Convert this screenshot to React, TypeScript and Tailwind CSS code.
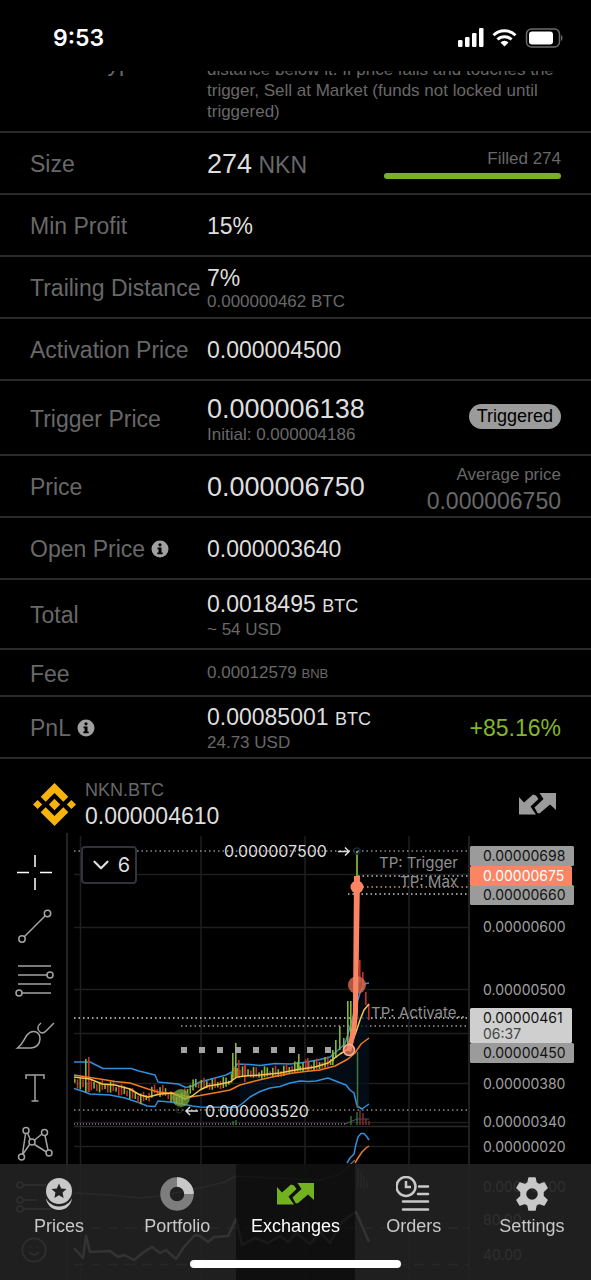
import type { ReactNode } from "react"
import { ChevronDown, Smile } from "lucide-react"

interface RowProps {
  label: string
  info?: boolean
  className?: string
  aside?: ReactNode
  children: ReactNode
}

function InfoIcon() {
  return (
    <svg viewBox="0 0 18 18" className="h-[18px] w-[18px]" aria-hidden="true">
      <circle cx="9" cy="9" r="8.5" fill="#a0a0a0" />
      <circle cx="9" cy="4.8" r="1.6" fill="#000" />
      <path d="M6.5 7.5h4v5h1.2v1.8H6.3v-1.8h1.3V9.2H6.5z" fill="#000" />
    </svg>
  )
}

function Row({ label, info, className = "min-h-[62px]", aside, children }: RowProps) {
  return (
    <div className={`grid grid-cols-[177px_1fr_auto] items-center border-b-2 border-[#2a2a2a] px-[30px] pt-[2px] ${className}`}>
      <dt className="flex items-center gap-1.5 text-[23px] leading-7 whitespace-nowrap text-[#686868]">
        {label}
        {info && (
          <button type="button" aria-label={`About ${label}`}>
            <InfoIcon />
          </button>
        )}
      </dt>
      <dd className="text-[23px] leading-7 whitespace-nowrap text-[#dedede]">{children}</dd>
      {aside && <dd className="text-right whitespace-nowrap">{aside}</dd>}
    </div>
  )
}

function Sub({ children }: { children: ReactNode }) {
  return <div className="text-[17px] leading-5 text-[#686868]">{children}</div>
}

function SwapIcon({ className }: { className: string }) {
  return (
    <svg viewBox="0 0 37 22" className={className} fill="currentColor" aria-hidden="true">
      <path d="M0 4 5 9.5 14 1.5 17 2.5 19.500 6 11.500 13.500 14.500 18 17 21.500H0z" />
      <path d="M20.500 0H37V17L31 11.500 20.500 20.500 18.500 20 15.500 14.500 24.500 6z" />
    </svg>
  )
}

function StatusBar() {
  return (
    <header className="flex h-[71px] items-start justify-between pt-[22px] pr-[28px] pl-[53px] text-white">
      <time className="font-['Inter',sans-serif] text-[23px] leading-8 font-semibold">9:53</time>
      <svg viewBox="0 0 105 20" className="mt-[6px] h-[20px] w-[105px]" aria-hidden="true">
        <g fill="#fff">
          <rect x="0" y="12" width="4.5" height="7" rx="1.2" />
          <rect x="7" y="9" width="4.5" height="10" rx="1.2" />
          <rect x="14" y="5" width="4.5" height="14" rx="1.2" />
          <rect x="21" y="0" width="4.5" height="19" rx="1.2" />
          <path d="M46.500 18.500 42.500 14.500a5.700 5.700 0 0 1 8 0z" />
        </g>
        <g fill="none" stroke="#fff" strokeWidth="3">
          <path d="M39.500 11.500a10 10 0 0 1 14 0" />
          <path d="M35.500 7.300a15.600 15.600 0 0 1 22 0" />
        </g>
        <rect x="68.500" y="1" width="33" height="18" rx="5" fill="none" stroke="#6b6b6b" strokeWidth="1.500" />
        <rect x="71" y="3.500" width="24" height="13" rx="3" fill="#fff" />
        <path d="M103 7v6c2-.8 2-5.200 0-6z" fill="#6b6b6b" />
      </svg>
    </header>
  )
}

function OrderDetails() {
  return (
    <dl>
      <div className="flex h-[62px] items-end overflow-hidden border-b-2 border-[#2a2a2a] px-[30px] text-[#686868]">
        <dt className="mb-[54px] w-[177px] shrink-0 text-[23px] leading-7">Order Type</dt>
        <dd className="pb-[9px] text-[17px] leading-[21px]">
          distance below it. If price falls and touches the trigger, Sell at Market (funds not locked until triggered)
        </dd>
      </div>
      <Row
        label="Size"
        aside={
          <div className="w-[177px]">
            <div className="text-[17px] leading-5 text-[#686868]">Filled 274</div>
            <div className="mt-1 h-[6px] rounded-full bg-[#79b026]" />
          </div>
        }
      >
        <span className="text-[27px]">274</span> <span className="text-[#686868]">NKN</span>
      </Row>
      <Row label="Min Profit">15%</Row>
      <Row label="Trailing Distance">
        7%
        <Sub>0.000000462 BTC</Sub>
      </Row>
      <Row label="Activation Price">0.000004500</Row>
      <Row
        label="Trigger Price"
        className="min-h-[75px]"
        aside={
          <span className="mb-1 block rounded-full bg-[#9b9b9b] px-2 text-[18px] leading-[25px] text-black">Triggered</span>
        }
      >
        <div className="text-[27px] leading-8">0.000006138</div>
        <Sub>Initial: 0.000004186</Sub>
      </Row>
      <Row
        label="Price"
        aside={
          <div className="pt-1 text-[#686868]">
            <div className="text-[17px] leading-6">Average price</div>
            <div className="text-[23px] leading-7">0.000006750</div>
          </div>
        }
      >
        <span className="text-[27px]">0.000006750</span>
      </Row>
      <Row label="Open Price" info>
        0.000003640
      </Row>
      <Row label="Total" className="min-h-[70px]">
        0.0018495 <span className="text-[18px]">BTC</span>
        <Sub>~ 54 USD</Sub>
      </Row>
      <Row label="Fee" className="min-h-[47px]">
        <Sub>
          0.00012579 <span className="text-[13px]">BNB</span>
        </Sub>
      </Row>
      <Row
        label="PnL"
        info
        aside={<span className="text-[23px] leading-7 text-[#83b52e]">+85.16%</span>}
      >
        0.00085001 <span className="text-[18px]">BTC</span>
        <Sub>24.73 USD</Sub>
      </Row>
    </dl>
  )
}

function MarketHeader() {
  return (
    <div className="flex items-center pt-[19px] pr-[35px] pl-[33px]">
      <svg viewBox="0 0 42 42" className="h-[43px] w-[43px]" fill="#f6b30b" aria-label="Binance">
        <path d="M21 0 34.500 13.500 29.600 18.400 21 9.800 12.400 18.400 7.500 13.500z" />
        <path d="M21 42 34.500 28.500 29.600 23.600 21 32.200 12.400 23.600 7.500 28.500z" />
        <path d="M21 15.500 26.500 21 21 26.500 15.500 21zM4.500 16.500 9 21 4.500 25.500 0 21zM37.500 16.500 42 21 37.500 25.500 33 21z" />
      </svg>
      <div className="ml-[9px] flex-1">
        <div className="text-[18px] leading-6 text-[#686868]">NKN.BTC</div>
        <div className="text-[23px] leading-7 text-[#dedede]">0.000004610</div>
      </div>
      <button type="button" aria-label="Trade" className="text-[#9b9b9b]">
        <SwapIcon className="h-[22px] w-[37px]" />
      </button>
    </div>
  )
}

const TOOLS: { name: string; icon: ReactNode }[] = [
  {
    name: "Crosshair",
    icon: <path d="M20 3v12M20 26v12M2 20.500h12M25 20.500h12" stroke="#fff" />,
  },
  {
    name: "Trend line",
    icon: (
      <>
        <circle cx="7" cy="33" r="3.200" />
        <circle cx="32.500" cy="7.500" r="3.200" />
        <path d="M9.300 30.700 30.200 9.800" />
      </>
    ),
  },
  {
    name: "Fib retracement",
    icon: (
      <>
        <path d="M3 6h33M3 15h29M3 24h33M7 33h29" />
        <circle cx="35" cy="15" r="3" />
        <circle cx="4" cy="33" r="3" />
      </>
    ),
  },
  {
    name: "Brush",
    icon: (
      <>
        <path d="M2.500 34C8 30 9 25 12 21c5-6 13-4 13 4 0 5-4 9-9 9z" />
        <path d="M26 9c-4 3-4 7-1 9 2 2 4 1 6-1l8-8" />
      </>
    ),
  },
  {
    name: "Text",
    icon: <path d="M11 11V7h18v4M20 7v26M16.500 33h7" />,
  },
  {
    name: "Pattern",
    icon: (
      <>
        <path d="M10.500 12 7.500 32M12.500 11 15.500 18M19 18.500 27 12M30 13.500 33 28M19.500 22.500 31.500 30M14.500 22.500 8 32" />
        <circle cx="11" cy="8.500" r="3" />
        <circle cx="17" cy="20" r="3" />
        <circle cx="29.500" cy="10.500" r="3" />
        <circle cx="34" cy="31" r="3" />
        <circle cx="6.500" cy="35" r="3" />
      </>
    ),
  },
  {
    name: "Forecast",
    icon: (
      <>
        <path d="M8 9h28M8 24h14M8 33h28" />
        <circle cx="5" cy="9" r="3" />
        <circle cx="5" cy="24" r="3" />
        <circle cx="5" cy="33" r="3" />
      </>
    ),
  },
]

function Toolbar() {
  return (
    <div className="flex w-[68px] shrink-0 flex-col border-r-2 border-[#232323] pt-3">
      {TOOLS.map((tool) => (
        <button key={tool.name} type="button" aria-label={tool.name} className="flex h-[54px] items-center pl-[15px]">
          <svg viewBox="0 0 40 40" className="h-[40px] w-[40px]" fill="none" stroke="#a3a3a3" strokeWidth="1.500">
            {tool.icon}
          </svg>
        </button>
      ))}
      <button type="button" aria-label="Icons" className="flex h-[54px] items-center pl-5 text-[#a3a3a3]">
        <Smile size={28} strokeWidth={1.500} />
      </button>
    </div>
  )
}

// Middle of the quiet candles, sampled along the time axis
const BASE: [number, number][] = [
  [74, 1080], [80, 1084], [90, 1086], [110, 1087], [120, 1090], [130, 1093], [140, 1099], [148, 1097],
  [155, 1090], [165, 1092], [176, 1100], [182, 1099], [188, 1090], [196, 1084], [210, 1085], [228, 1083],
  [234, 1074], [240, 1071], [260, 1074], [270, 1072], [280, 1073], [290, 1069], [300, 1067], [320, 1065],
  [330, 1062], [336, 1053],
]

function baseAt(x: number) {
  for (let i = 1; i < BASE.length; i++) {
    const [x0, y0] = BASE[i - 1]
    const [x1, y1] = BASE[i]
    if (x <= x1) return y0 + ((y1 - y0) * (x - x0)) / (x1 - x0)
  }
  return BASE[BASE.length - 1][1]
}

const GREEN = "#86b62b"
const RED = "#c4302a"

const quiet = Array.from({ length: 95 }, (_, i) => {
  const x = 75 + i * 2.75
  const mid = baseAt(x) + Math.sin(i * 1.7) * 1.5
  const half = 2 + Math.abs(Math.sin(i * 2.3)) * 3.5
  return { x, top: mid - half, bottom: mid + half, color: Math.sin(i * 2.9 + 1) > (x < 180 ? 0.2 : -0.3) ? GREEN : RED }
})

const spikes = [
  { x: 86, top: 1059, bottom: 1092, color: GREEN },
  { x: 89, top: 1057, bottom: 1092, color: RED },
  { x: 233, top: 1053, bottom: 1080, color: GREEN },
  { x: 236, top: 1043, bottom: 1078, color: GREEN },
  { x: 239, top: 1060, bottom: 1078, color: RED },
  { x: 245, top: 1064, bottom: 1082, color: RED },
  { x: 299, top: 1054, bottom: 1070, color: GREEN },
  { x: 308, top: 1058, bottom: 1072, color: RED },
  { x: 333, top: 1050, bottom: 1065, color: GREEN },
  { x: 336, top: 1040, bottom: 1058, color: GREEN },
  { x: 340, top: 1026, bottom: 1050, color: GREEN },
  { x: 344, top: 1038, bottom: 1050, color: GREEN },
  { x: 348, top: 1001, bottom: 1045, color: GREEN },
  { x: 351, top: 1001, bottom: 1036, color: GREEN },
  { x: 360, top: 960, bottom: 982, color: RED },
  { x: 363, top: 972, bottom: 990, color: RED },
  { x: 366, top: 992, bottom: 1005, color: RED },
  { x: 369, top: 1004, bottom: 1020, color: RED },
]

const AXIS: [string, number][] = [
  ["0.00000600", 927], ["0.00000500", 990], ["0.00000380", 1084], ["0.00000340", 1122],
  ["0.00000020", 1147], ["0.00000000", 1187], ["80.00", 1220], ["40.00", 1255],
]

const TAGS = [
  { text: "0.00000698", y: 846, w: 104, bg: "#9b9b9b", fg: "#111" },
  { text: "0.00000660", y: 885, w: 104, bg: "#9b9b9b", fg: "#111" },
  { text: "0.00000675", y: 866, w: 102, bg: "#fb8462", fg: "#fff" },
  { text: "0.00000450", y: 1043, w: 104, bg: "#9b9b9b", fg: "#111" },
]

const DOTTED: [number, number, string][] = [
  [74, 851, "#8a8a8a"], [358, 876, "#b8b8b8"], [358, 887, "#e09078"], [348, 894, "#c8c8c8"],
  [74, 1018, "#d8d8d8"], [181, 1026, "#9a9a9a"], [74, 1110, "#8a8a8a"],
]

function PriceChart() {
  return (
    <div className="relative min-w-0 flex-1">
      <svg viewBox="68 833 523 447" className="block h-auto w-full font-['Inter',sans-serif]" role="img" aria-label="NKN.BTC price chart">
        {/* Grid */}
        <g stroke="#1f1f1f" strokeWidth="1.500">
          <path d="M80.500 836V1280M201 836V1280M305 836V1280M409 836V1280" />
          <path d="M74 874.500H469M74 927.500H469M74 989.500H469M74 1033.500H469M74 1083.500H469M74 1122.500H469M74 1146.500H469" />
          <path d="M469 836V1280M74 1126.500H469" stroke="#2a2a2a" />
          <path d="M74 1228H469M74 1264.500H469" stroke="#555" strokeDasharray="10 7" />
        </g>

        {DOTTED.map(([x, y, color]) => (
          <line key={y} x1={x} x2="469" y1={y} y2={y} stroke={color} strokeWidth="1.500" strokeDasharray="1.500 3" />
        ))}

        {/* Bands */}
        <path d="M240 1064 275 1063 300 1063 325 1058 345 1045 355 1015 369 983V1104L362 1109 357 1108 354 1095 340 1084 328 1078 290 1083 255 1093 240 1104z" fill="#04101c" opacity=".7" />
        <g fill="none" stroke="#2f8fdd" strokeWidth="1.500" strokeLinejoin="round">
          <path d="M74 1062 90 1062 96 1065 103 1068.500 131 1068.500 139 1071 155 1075 158 1082 178 1084 186 1087.500 192 1086 200 1082 215 1078 226 1075 232 1072 237 1064 250 1064.500 260 1065.500 275 1063.500 290 1064 300 1063 318 1060 330 1057 345 1044 352 1020 360 993 364 984 369 983" />
          <path d="M74 1088.500 82 1091 90 1094 110 1095 125 1098 140 1103 147 1106 155 1106.500 158 1101 170 1102 182 1104 192 1106 200 1107 237 1107.500 243 1103 250 1097 260 1091.500 270 1088 280 1086.500 290 1083 300 1081 308 1081.500 316 1081 328 1078 338 1082 346 1085 350 1090 354 1093 357 1106 362 1109 369 1104" />
        </g>

        {/* Candles */}
        {[...quiet, ...spikes].map((c, i) => (
          <rect key={i} x={c.x - 1} y={c.top} width="1.600" height={c.bottom - c.top} fill={c.color} />
        ))}
        <path d="M357 851V876" stroke="#6fa02a" strokeWidth="2" />
        <path d="M357.500 1052V1108" stroke="#46743a" strokeWidth="1.500" />
        <circle cx="357" cy="851" r="3" fill="none" stroke="#18263a" strokeWidth="1.500" />

        <g fill="none" strokeWidth="1.500" strokeLinejoin="round">
          <path stroke="#ee7a22" d="M74 1075 87 1077 100 1079 115 1081.500 130 1083 148 1089 158 1092 175 1094 190 1097 200 1095.500 214 1093 230 1090 240 1085 255 1081 272 1077 290 1073.500 305 1071.500 320 1070 335 1066 348 1059 355 1053 361 1044 369 1038" />
          <path stroke="#f6c552" d="M74 1077 90 1079 102 1084 115 1085 130 1089 140 1095 148 1097 160 1094 172 1093 185 1099 192 1096 200 1090 208 1086 218 1084.500 230 1082 237 1077 245 1076 260 1075 280 1073 295 1070 315 1067 328 1063 340 1054 350 1048 356 1032 360 1020 364 1010 369 1004" />
        </g>

        {/* Volume */}
        <path d="M74 1124H345" stroke="#6b5a6e" strokeWidth="2" strokeDasharray="1 2" />
        <path d="M345 1124 357 1119H369" stroke="#6b4a6e" fill="none" />
        <path d="M351 1116V1125M357 1112V1125M236 1120V1125M233 1121V1125" stroke="#2f6d35" strokeWidth="1.500" />
        <path d="M360 1110V1125M363 1113V1125M366 1119V1125M369 1121V1125" stroke="#7c2f35" strokeWidth="1.500" />

        {/* Activation level */}
        {Array.from({ length: 9 }, (_, i) => (
          <rect key={i} x={181 + i * 18} y="1047" width="6" height="6" fill="#a3a3a3" />
        ))}

        {/* Trade marks */}
        <circle cx="181" cy="1098" r="9" fill="#7fae3c" opacity=".75" />
        <circle cx="179" cy="1110" r="3" fill="none" stroke="#1d3018" />
        <circle cx="357" cy="985" r="9" fill="#cf6650" opacity=".85" />
        <path d="M354 876H360L358 1012C357 1030 354 1042 351 1052L346 1050C351 1034 353 1022 353 1005z" fill="#fb8462" />
        <circle cx="357" cy="887" r="6.500" fill="#fb8462" />
        <circle cx="349" cy="1050" r="5.500" fill="#fb8462" fillOpacity=".7" stroke="#fcb19c" strokeWidth="1.500" />

        {/* MACD and RSI panes */}
        <g fill="none" strokeWidth="1.500" strokeLinejoin="round">
          <path stroke="#2f8fdd" d="M347 1163 350 1158 354 1154 356 1144 358 1137 361 1133.500 364 1133.500 367 1137 369 1140" />
          <path stroke="#ee7a22" d="M355 1163 358 1158 362 1152 366 1148 369 1146" />
          <path stroke="#666" d="M74 1193 110 1195 140 1198 160 1196 200 1188 225 1182 236 1176 270 1178 320 1180 340 1174 355 1160" />
          <path stroke="#555" d="M358 1168V1188M361 1172V1188M364 1176V1188M367 1180V1188" />
          <path
            stroke="#c8c8c8"
            strokeWidth="2.500"
            d="M74 1248 83 1258 86 1236 90 1252 110 1251 118 1257 124 1255 134 1260 144 1252 152 1247 160 1253 166 1250 176 1259 184 1247 195 1235 200 1236 208 1242 214 1237 228 1236 236 1219 242 1245 255 1238 268 1243 280 1236 288 1242 296 1233 310 1244 320 1232 330 1243 342 1222 350 1216 356 1212 369 1242"
          />
        </g>

        {/* Chart labels */}
        <g fontSize="16" fill="#dedede">
          <text x="224" y="857">0.000007500</text>
          <text x="205" y="1117">0.000003520</text>
        </g>
        <g fontSize="15" fill="#8f8f8f">
          <text x="458" y="868" textAnchor="end">TP: Trigger</text>
          <text x="458" y="887" textAnchor="end">TP: Max</text>
          <text x="371" y="1018">TP: Activate..</text>
        </g>
        <path d="M338 851.500H349M345 847.500 349 851.500 345 855.500M198 1111H186M190 1107 186 1111 190 1115" fill="none" stroke="#dedede" strokeWidth="1.500" />

        {/* Price axis */}
        <g fontSize="14" fill="#a0a0a0">
          {AXIS.map(([text, y]) => (
            <text key={text} x="483" y={y + 5}>
              {text}
            </text>
          ))}
          {TAGS.map((tag) => (
            <g key={tag.text}>
              <rect x="470" y={tag.y} width={tag.w} height="20" rx="1.500" fill={tag.bg} />
              <text x="483" y={tag.y + 15} fill={tag.fg}>
                {tag.text}
              </text>
            </g>
          ))}
          <rect x="470" y="1008" width="102" height="35" rx="1.500" fill="#cfcfcf" />
          <text x="483" y="1023" fill="#111">
            0.00000461
          </text>
          <text x="483" y="1039" fill="#444">
            06:37
          </text>
        </g>
      </svg>
      <button
        type="button"
        className="absolute top-[13px] left-[13px] flex h-[38px] w-[56px] items-center justify-center gap-1 rounded border-2 border-[#33323b] bg-black font-['Inter',sans-serif] text-[20px] text-[#dedede]"
      >
        <ChevronDown size={26} strokeWidth={2} />6
      </button>
    </div>
  )
}

const TABS: { name: string; icon: ReactNode }[] = [
  {
    name: "Prices",
    icon: (
      <svg viewBox="0 0 36 36" className="h-[36px] w-[36px]">
        <circle cx="18" cy="21" r="13" fill="#c8c8c8" />
        <circle cx="18" cy="16" r="14.500" fill="#222" />
        <circle cx="18" cy="15" r="13" fill="#c8c8c8" />
        <path d="m18 7.500 2.200 4.900 5.300.6-3.900 3.600 1 5.300-4.600-2.600-4.600 2.600 1-5.300-3.900-3.600 5.300-.6z" fill="#222" />
      </svg>
    ),
  },
  {
    name: "Portfolio",
    icon: (
      <svg viewBox="0 0 36 36" className="h-[36px] w-[36px]" fill="none" strokeWidth="9.500">
        <circle cx="18" cy="18" r="12" stroke="#7d7d7d" />
        <path d="M18 6a12 12 0 0 1 12 12" stroke="#c8c8c8" />
      </svg>
    ),
  },
  { name: "Exchanges", icon: <SwapIcon className="h-[22px] w-[37px] text-[#73b21f]" /> },
  {
    name: "Orders",
    icon: (
      <svg viewBox="0 0 36 36" className="h-[36px] w-[36px]" fill="none" stroke="#c8c8c8" strokeWidth="2.500" strokeLinecap="round">
        <circle cx="10" cy="10.500" r="9.500" />
        <path d="M10 5v6h5" strokeLinecap="butt" />
        <path d="M23 10.500h9M22 18h10M7 25.500h25M7 33.500h25" />
      </svg>
    ),
  },
  {
    name: "Settings",
    icon: (
      <svg viewBox="0 0 36 36" className="h-[36px] w-[36px]">
        <path
          fill="#c8c8c8"
          fillRule="evenodd"
          stroke="#c8c8c8"
          strokeWidth="1.500"
          strokeLinejoin="round"
          d="M15 2h6l1 5 3 1.700 5-1.700 3 5-4 3.600v4.800l4 3.600-3 5-5-1.700-3 1.700-1 5h-6l-1-5-3-1.700-5 1.700-3-5 4-3.600v-4.800L3 12l3-5 5 1.700L14 7zM18 11.500a6.500 6.500 0 1 0 0 13 6.500 6.500 0 0 0 0-13z"
        />
      </svg>
    ),
  },
]

function TabBar() {
  return (
    <nav className="fixed inset-x-0 bottom-0 h-[116px] bg-[#222]/90">
      <ul className="grid h-full grid-cols-5">
        {TABS.map((tab) => {
          const active = tab.name === "Exchanges"
          return (
            <li key={tab.name} className={active ? "bg-black/50 text-white" : "text-[#c8c8c8]"}>
              <a href={`#${tab.name.toLowerCase()}`} aria-current={active ? "page" : undefined} className="flex flex-col items-center pt-3">
                <span className="flex h-[36px] items-center">{tab.icon}</span>
                <span className="text-[18px] leading-7">{tab.name}</span>
              </a>
            </li>
          )
        })}
      </ul>
      <div className="absolute inset-x-0 bottom-3 mx-auto h-2 w-[211px] rounded-full bg-white" />
    </nav>
  )
}

export default function App() {
  return (
    <div className="min-h-screen bg-black font-['Liberation_Sans',Arial,sans-serif]">
      <StatusBar />
      <main>
        <OrderDetails />
        <MarketHeader />
        <div className="mt-[3px] flex overflow-hidden">
          <Toolbar />
          <PriceChart />
        </div>
      </main>
      <TabBar />
    </div>
  )
}
